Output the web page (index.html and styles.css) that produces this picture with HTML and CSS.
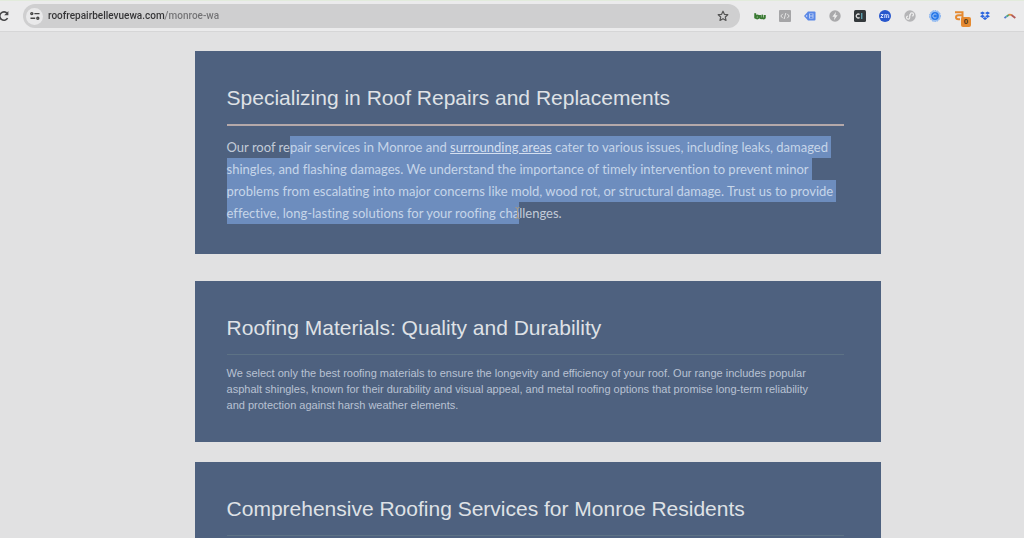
FILE: index.html
```html
<!DOCTYPE html>
<html lang="en">
<head>
<meta charset="utf-8">
<meta name="viewport" content="width=device-width, initial-scale=1">
<title>Roof Repair Monroe WA</title>
<link rel="stylesheet" href="styles.css">
</head>
<body>
<header class="toolbar">
  <button class="icon-button reload" type="button" aria-label="Reload">
    <svg width="14" height="14" viewBox="0 0 14 14" fill="none" stroke="#48484a" stroke-width="1.6"><path d="M10.6 9.2A4.2 4.2 0 1 1 10.2 4.4"/><path d="M11.4 2v4.2H7.2z" fill="#48484a" stroke="none"/></svg>
  </button>
  <div class="address">
    <button class="icon-button site-info" type="button" aria-label="Site information">
      <svg width="12" height="12" viewBox="0 0 12 12" fill="none" stroke="#444" stroke-width="1.4"><circle cx="2.8" cy="3.6" r="1"/><path d="M5.4 3.6H10.500M1.500 8.2H6.2"/><circle cx="8.8" cy="8.2" r="1"/></svg>
    </button>
    <input class="url" type="text" aria-label="Address" value="roofrepairbellevuewa.com/monroe-wa">
    <button class="icon-button" type="button" aria-label="Bookmark">
      <svg width="14" height="14" viewBox="0 0 14 14" fill="none" stroke="#555" stroke-width="1.2" stroke-linejoin="round"><path d="M7 2.200l1.400 3.100 3.400.4-2.500 2.300.7 3.400-3-1.700-3 1.700.7-3.400L2.200 5.700l3.400-.4z"/></svg>
    </button>
  </div>
  <nav class="extensions" aria-label="Extensions">
    <button class="icon-button" type="button" aria-label="BuiltWith"><svg width="14" height="14" viewBox="0 0 14 14" fill="none" stroke="#397a32" stroke-width="1.900" stroke-linejoin="round"><path d="M2.200 4.200v5.200"/><circle cx="4.200" cy="8" r="1.500"/><path d="M7 6v2.800q1.400 1.200 2.300 0V6.500v2.300q1.300 1.200 2.500 0V6"/></svg></button>
    <button class="icon-button" type="button" aria-label="Code"><svg width="14" height="14" viewBox="0 0 14 14" fill="none" stroke="#e4e4e4"><rect x="1" y="1" width="12" height="12" rx="1" fill="#a5a5a7" stroke="none"/><path d="M4.800 4.800L2.800 7l2 2.200M9.200 4.800l2 2.200-2 2.200M7.800 4L6.200 10"/></svg></button>
    <button class="icon-button" type="button" aria-label="Tag assistant"><svg width="14" height="14" viewBox="0 0 14 14"><path d="M5 2.500h6.500q1 0 1 1v7q0 1-1 1H5L1 7z" fill="#5b88e6"/><path d="M6 4.500h4.500v5H6z" fill="#b9cdf6"/><path d="M7 5.500h2.500M7 7h2.500M7 8.500h2.500" stroke="#4778df" stroke-width=".8"/><circle cx="3.600" cy="7" r=".8" fill="#dce6fb"/></svg></button>
    <button class="icon-button" type="button" aria-label="AMP"><svg width="14" height="14" viewBox="0 0 14 14"><circle cx="7" cy="7" r="5.700" fill="#a9a9ab"/><path d="M8 2.800L4.400 7.700h2.200L6 11.200l3.600-4.900H7.400z" fill="#eee"/></svg></button>
    <button class="icon-button" type="button" aria-label="Clearbit"><svg width="14" height="14" viewBox="0 0 14 14" fill="none" stroke-width="1.400"><rect x="1" y="1" width="12" height="12" rx="1.500" fill="#34393c"/><path d="M6.600 5.500a2 2 0 1 0 0 3" stroke="#ddd"/><path d="M8.700 4v6" stroke="#5b9cab"/></svg></button>
    <button class="icon-button" type="button" aria-label="Zoom"><svg width="14" height="14" viewBox="0 0 14 14" fill="none" stroke="#d8e2ff"><circle cx="7" cy="7" r="6" fill="#2756cc" stroke="none"/><path d="M2.800 5.500h2.400L2.800 8.500h2.400M6.800 9V5.500h1q.9 0 .9 1V9m0-2.500q0-1 1-1t1 1V9"/></svg></button>
    <button class="icon-button" type="button" aria-label="Link"><svg width="14" height="14" viewBox="0 0 14 14" fill="none" stroke="#eee" stroke-width="1.200"><circle cx="7" cy="7" r="5.700" fill="#b5b5b7" stroke="none"/><path d="M6.700 7.600v1a1.600 1.600 0 1 1-1.600-1.600M7.300 6.400v-1a1.600 1.600 0 1 1 1.600 1.600M6.700 8V6q0-.5.600-.6"/></svg></button>
    <button class="icon-button" type="button" aria-label="Recorder"><svg width="14" height="14" viewBox="0 0 14 14" fill="none"><circle cx="7" cy="7" r="5.500" fill="#9dc2f3" stroke="#7faef0" stroke-dasharray="1.500 1"/><circle cx="7" cy="7" r="3.900" fill="#2979e8"/><path d="M8.500 5.800a2 2 0 1 0 0 2.400" stroke="#a6cafb"/></svg></button>
    <button class="icon-button badged" type="button" aria-label="Ahrefs, 0"><svg width="14" height="14" viewBox="0 0 14 14" fill="none" stroke="#e58a31" stroke-width="2"><path d="M2 3.300h7.500V11M9 6.300H5.500q-2.500 0-2.500 2t2.500 2H7"/></svg><span class="badge">0</span></button>
    <button class="icon-button" type="button" aria-label="Dropbox"><svg width="14" height="14" viewBox="0 0 14 14" fill="#2c66df"><path d="M4.500 2.500L7 4.100 4.500 5.700 2 4.100zM9.500 2.500L12 4.100 9.500 5.700 7 4.100zM4.500 5.700L7 7.300 4.500 8.900 2 7.300zM9.500 5.700L12 7.300 9.500 8.900 7 7.300zM7 8l2.300 1.500L7 11 4.700 9.500z"/></svg></button>
    <button class="icon-button" type="button" aria-label="Rainbow"><svg width="14" height="14" viewBox="0 0 14 14" fill="none" stroke-width="1.800"><path d="M1.500 9.200l2-1.800" stroke="#557ccd"/><path d="M3.500 7.400L6 5.700" stroke="#49a878"/><path d="M5.500 5.900q1.500-.8 3.300.2" stroke="#e08a42"/><path d="M8.500 6l3.800 3" stroke="#b25a58"/></svg></button>
  </nav>
</header>
<main class="page">
  <section class="card featured">
    <h2 class="title">Specializing in Roof Repairs and Replacements</h2>
    <p class="text">Our roof re<mark class="selected">pair services in Monroe and <a href="#areas">surrounding areas</a> cater to various issues, including leaks, damaged</mark><br>
    <mark class="selected">shingles, and flashing damages. We understand the importance of timely intervention to prevent minor</mark><br>
    <mark class="selected">problems from escalating into major concerns like mold, wood rot, or structural damage. Trust us to provide</mark><br>
    <mark class="selected last">effective, long-lasting solutions for your roofing cha<svg class="cursor" width="5" height="12" viewBox="0 0 5 12" fill="none" stroke="#a99b80" aria-hidden="true"><path d="M.5.5q2 0 2 1.500v8q0 1.500-2 1.500M4.500.5q-2 0-2 1.500M2.500 10q0 1.500 2 1.500"/></svg></mark>llenges.</p>
  </section>
  <section class="card">
    <h2 class="title">Roofing Materials: Quality and Durability</h2>
    <p class="text">We select only the best roofing materials to ensure the longevity and efficiency of your roof. Our range includes popular<br>
    asphalt shingles, known for their durability and visual appeal, and metal roofing options that promise long-term reliability<br>
    and protection against harsh weather elements.</p>
  </section>
  <section class="card">
    <h2 class="title">Comprehensive Roofing Services for Monroe Residents</h2>
  </section>
</main>
</body>
</html>
```
FILE: styles.css
```css
* {
  box-sizing: border-box;
}

body {
  margin: 0;
  height: 100vh;
  display: flex;
  flex-direction: column;
  overflow: hidden;
  background: #e1e1e2;
  font-family: "Liberation Sans", Arial, sans-serif;
}

.toolbar {
  flex: none;
  display: flex;
  align-items: center;
  height: 32px;
  padding-right: 6px;
  background: #ebebec;
  border-top: 1px solid #e2ebdc;
  border-bottom: 1px solid #d6d6d7;
}

.icon-button {
  flex: none;
  display: grid;
  place-items: center;
  width: 16px;
  height: 16px;
  padding: 0;
  border: 0;
  background: none;
}

.reload {
  margin-left: -4px;
  margin-right: 11px;
}

.address {
  flex: 1;
  display: flex;
  align-items: center;
  gap: 5px;
  height: 24px;
  padding: 0 9px 0 3px;
  border-radius: 12px;
  background: #cfcfd0;
}

.site-info {
  width: 17px;
  height: 17px;
  border-radius: 50%;
  background: #e9e9ea;
}

/* The host is drawn darker than the path. */
.url {
  flex: 1;
  min-width: 0;
  padding: 0;
  border: 0;
  outline: 0;
  background: linear-gradient(90deg, #333335 117px, #727274 117px);
  background-clip: text;
  -webkit-text-fill-color: transparent;
  color: #333335;
  font: 500 10px/16px Roboto, sans-serif;
}

.extensions {
  display: flex;
  gap: 9px;
  margin-left: 12px;
}

.badged {
  position: relative;
}

.badge {
  position: absolute;
  right: -3px;
  bottom: -3px;
  width: 10px;
  height: 10px;
  border-radius: 2px;
  background: #e58a31;
  color: #4b341c;
  font: bold 8px/10px "Liberation Sans", sans-serif;
}

.page {
  flex: 1;
  min-height: 0;
  overflow: hidden;
  padding: 19px 14% 0 19%;
}

.card {
  margin-bottom: 20px;
  padding: 34px 37px 29px 32px;
  background: #4e617f;
  color: #b9c2d3;
}

.title {
  margin: 0 0 10px;
  padding-bottom: 13px;
  border-bottom: 1px solid #5d7285;
  color: #dfe1e6;
  font-size: 21px;
  font-weight: 400;
  line-height: 26px;
}

.text {
  margin: 0;
  font-size: 11px;
  line-height: 16px;
  white-space: nowrap;
}

.featured {
  margin-bottom: 27px;
  padding-bottom: 30px;
}

.featured .title {
  border-bottom: 2px solid #b5a9aa;
}

.featured .text {
  color: #c3cbd8;
  font-family: Lato, sans-serif;
  font-size: 13px;
  font-variant-ligatures: none;
  line-height: 22px;
}

.selected {
  position: relative;
  padding: 3px 3px 3px 0;
  background: #6d8dbe;
  color: #c6d5e9;
}

.selected.last {
  padding-right: 0;
}

.selected a {
  color: #d4dfef;
}

.cursor {
  position: absolute;
  right: -1px;
  top: 5px;
}
```
